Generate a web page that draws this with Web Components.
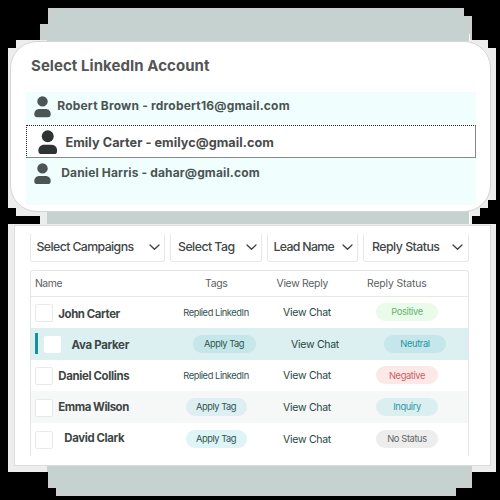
<!DOCTYPE html>
<html lang="en"><head><meta charset="utf-8"><title>Select LinkedIn Account</title>
<style>
html,body{margin:0;background:#000;width:500px;height:500px;overflow:hidden}
body{font-family:Inter,"Liberation Sans",sans-serif}
</style></head><body>
<outreach-page></outreach-page>
<script>
const define=(name,html,setup)=>customElements.define(name,class extends HTMLElement{
  connectedCallback(){
    if(this.shadowRoot)return;
    const t=document.createElement('template');
    t.innerHTML=html;
    this.attachShadow({mode:'open'}).append(t.content.cloneNode(true));
    if(setup)setup(this);
  }
});

// Text whose tracking is adjusted so that it spans the width in its "w" attribute.
define('tracked-text','<style>:host{display:block;white-space:nowrap;width:max-content;line-height:16px;flex:none}</style><span><slot></slot></span>',el=>{
  const span=el.shadowRoot.querySelector('span');
  const w=span.getBoundingClientRect().width;
  el.style.letterSpacing=((+el.getAttribute('w')-w)/el.textContent.length)+'px';
});

define('page-backdrop',`<style>:host{display:block;position:absolute;inset:0}svg{display:block}</style>
<svg width="500" height="500" shape-rendering="crispEdges">
<path fill="#cbcfcd" d="M48 8H464V16H472V44H40V24H48Z"/>
<path fill="#c6d2d0" d="M56 9H456L464 16L469 24V44H46L49 24Z"/>
<path fill="#ededed" d="M16 40H488V48H496V200H488V208H480V216H472V224H40V216H16V208H8V48H16Z"/>
<path fill="#c6d2d0" d="M47 40H469V41H47ZM47 210H469V225H47Z"/>
<path fill="#fff" d="M469 34H470V41H469ZM469 212H470V225H469Z"/>
<path fill="#ededed" d="M8 224H496V472H8Z"/>
<path fill="#cbcfcd" d="M47 464H472V488H456V496H56V488H48V472H47Z"/>
<path fill="#c6d2d0" d="M47 464H469V480L456 488L448 494H62L56 488L48 480V472H47Z"/>
</svg>`);

define('person-icon',`<style>:host{display:block;flex:none;width:var(--s,17px);height:calc(var(--s,17px)*1.265)}svg{display:block;width:100%;height:100%}</style>
<svg viewBox="0 0 17 21.5" fill="currentColor"><circle cx="8.5" cy="5.4" r="5.2"/><path d="M5.5 12.9H11.5C14.8 12.9 16.7 15 16.7 18.2Q16.7 21.2 13.8 21.2H3.2Q.3 21.2 .3 18.2C.3 15 2.2 12.9 5.5 12.9Z"/></svg>`);

define('account-row',`<style>
:host{display:flex;box-sizing:border-box;align-items:flex-start;height:33px;font-size:12px;font-weight:650;color:#4a5453}
:host([selected]){background:#fff;border:1px solid #888;border-top:1px dotted #222;border-left:1px dotted #222;font-size:12.7px;color:#484b4c}
person-icon{margin:var(--it) 0 0 var(--il);color:#4b5554}
:host([selected]) person-icon{color:#303334}
div{margin:var(--tt) 0 0 var(--tl)}
</style><person-icon></person-icon><div><slot></slot></div>`);

define('account-card',`<style>
:host{display:block;box-sizing:border-box;width:481px;height:171.5px;margin-left:9.5px;background:#fff;border:1px solid #d2d6d6;border-radius:27px;padding:16px 14px 0 15.5px}
.title{font-size:15px;font-weight:650;color:#535556;padding-left:5px}
.list{background:#f0fffe;height:113px;margin-top:18.5px}
</style><div class="title"><tracked-text w="178.5">Select LinkedIn Account</tracked-text></div>
<div class="list">
<account-row style="--il:7.6px;--it:4px;--tl:6.7px;--tt:6px"><tracked-text w="232.5">Robert Brown - rdrobert16@gmail.com</tracked-text></account-row>
<account-row selected style="--s:19.5px;--il:10.5px;--it:3.7px;--tl:8.5px;--tt:9px"><tracked-text w="208.5">Emily Carter - emilyc@gmail.com</tracked-text></account-row>
<account-row style="--il:7.6px;--it:4.5px;--tl:10.7px;--tt:7px"><tracked-text w="198.5">Daniel Harris - dahar@gmail.com</tracked-text></account-row>
</div>`);

define('filter-select',`<style>
:host{display:flex;box-sizing:border-box;height:28px;border:1px solid #e7e9e9;border-top:0;border-radius:0 0 3px 3px;justify-content:space-between;padding:5px 4px 0 var(--pl,5.5px);font-size:12.3px;font-weight:500;color:#434748}
svg{display:block;margin-top:5px}
</style><slot></slot><svg width="11" height="7" fill="none" stroke="#3e4345" stroke-width="1.3" stroke-linecap="round" stroke-linejoin="round"><path d="M1 1L5.5 5.3L10 1"/></svg>`);

define('status-pill',`<style>
:host{display:flex;box-sizing:border-box;padding-top:1px;width:62px;height:18px;border-radius:9px;justify-content:center;align-items:center;background:var(--bg);color:var(--fg);font-size:9.3px}
</style><slot></slot>`);

define('lead-row',`<style>
:host{display:grid;box-sizing:border-box;height:32px;grid-template-columns:152px 100px 93px 62px;padding-left:var(--shift,0);background:var(--row,transparent)}
.name{display:flex;padding-left:4px}
.bar{width:2.5px;height:21px;background:#16929d;margin:5px 6px 0 -8px}
.box{box-sizing:border-box;width:18px;height:18px;background:#fff;border:1px solid #e8eaea;border-radius:2px;margin-top:var(--bt,8px)}
:host([active]) .box{width:17px;height:17px;border:0;margin-top:8px}
.label{font-size:11.4px;font-weight:650;color:#3d4645;margin:var(--nt,10px) 0 0 var(--nl,5.3px)}
.tag{width:66px;display:flex;justify-content:center;font-size:9.3px;color:#31534f;padding-top:var(--pt,7px)}
.chat{font-size:10.5px;color:#254741;padding-top:var(--ct,9px)}
.status{padding-top:var(--pt,7px)}
</style><div class="name"><div class="lead"></div><div class="box"></div><div class="label"><slot name="name"></slot></div></div>
<div class="tag"><slot name="tag"></slot></div><div class="chat"><tracked-text w="48">View Chat</tracked-text></div><div class="status"><slot></slot></div>`,el=>{
  if(el.hasAttribute('active'))el.shadowRoot.querySelector('.lead').className='bar';
});

define('lead-table',`<style>
:host{display:block;box-sizing:border-box;width:439px;height:186px;margin:8px 0 0;border:1px solid #e4e6e6;border-bottom:0;border-radius:3px 3px 0 0}
header{display:grid;grid-template-columns:170px 71.5px 90.5px auto;height:26px;box-sizing:border-box;border-bottom:1px solid #e7e9e9;padding:5px 0 0 4px;font-size:10.4px;color:#5b5e5f}
status-pill.t{width:61px;--fg:#31534f}
</style>
<header><tracked-text w="27">Name</tracked-text><tracked-text w="22.5">Tags</tracked-text><tracked-text w="51.5">View Reply</tracked-text><tracked-text w="59.5">Reply Status</tracked-text></header>
<lead-row style="height:31px;--bt:7.5px;--nt:9px;--pt:6px;--ct:8px"><tracked-text slot="name" w="61.5">John Carter</tracked-text><tracked-text slot="tag" w="65.5" style="padding-top:2px">Replied LinkedIn</tracked-text><status-pill style="--bg:#eafbea;--fg:#63b66e"><tracked-text w="31.5">Positive</tracked-text></status-pill></lead-row>
<lead-row active style="--shift:8px;--row:#dceff1;--nt:9px;--nl:11px"><tracked-text slot="name" w="57.5">Ava Parker</tracked-text><status-pill class="t" slot="tag" style="--bg:#c5e7e9;width:63px"><tracked-text w="40">Apply Tag</tracked-text></status-pill><status-pill style="--bg:#c5e7eb;--fg:#26949f"><tracked-text w="29.5">Neutral</tracked-text></status-pill></lead-row>
<lead-row style="height:31px;--bt:7.5px;--nt:8.5px;--pt:6.5px;--ct:8px"><tracked-text slot="name" w="71">Daniel Collins</tracked-text><tracked-text slot="tag" w="65.5" style="padding-top:2px">Replied LinkedIn</tracked-text><status-pill style="--bg:#fde8e8;--fg:#ce5e62"><tracked-text w="36">Negative</tracked-text></status-pill></lead-row>
<lead-row style="--row:#f6f7f7;--nt:8.5px"><tracked-text slot="name" w="70.5">Emma Wilson</tracked-text><status-pill class="t" slot="tag" style="--bg:#ddeff0"><tracked-text w="40">Apply Tag</tracked-text></status-pill><status-pill style="--bg:#dceff0;--fg:#2c98a1"><tracked-text w="27.5">Inquiry</tracked-text></status-pill></lead-row>
<lead-row style="--nt:7.5px;--nl:11.3px"><tracked-text slot="name" w="60">David Clark</tracked-text><status-pill class="t" slot="tag" style="--bg:#dff4f4"><tracked-text w="40">Apply Tag</tracked-text></status-pill><status-pill style="--bg:#ededed;--fg:#626464"><tracked-text w="39.5">No Status</tracked-text></status-pill></lead-row>`);

define('campaign-panel',`<style>
:host{display:block;box-sizing:border-box;width:477px;height:241px;margin:12.5px 0 0 14px;background:#fff;border:1px solid #dadddd;padding:8px 0 0 15px}
.filters{display:grid;grid-template-columns:135px 92px 91px 106px;gap:5px}
</style><div class="filters">
<filter-select><tracked-text w="97">Select Campaigns</tracked-text></filter-select>
<filter-select style="--pl:7px"><tracked-text w="56.5">Select Tag</tracked-text></filter-select>
<filter-select><tracked-text w="60.5">Lead Name</tracked-text></filter-select>
<filter-select style="--pl:8px;padding-right:5px"><tracked-text w="67.5">Reply Status</tracked-text></filter-select>
</div><lead-table></lead-table>`);

define('outreach-page',`<style>
:host{display:block;position:relative;width:500px;height:500px;box-sizing:border-box;padding-top:40.5px}
main{position:relative}
</style><page-backdrop></page-backdrop><main><account-card></account-card><campaign-panel></campaign-panel></main>`);
</script></body></html>
